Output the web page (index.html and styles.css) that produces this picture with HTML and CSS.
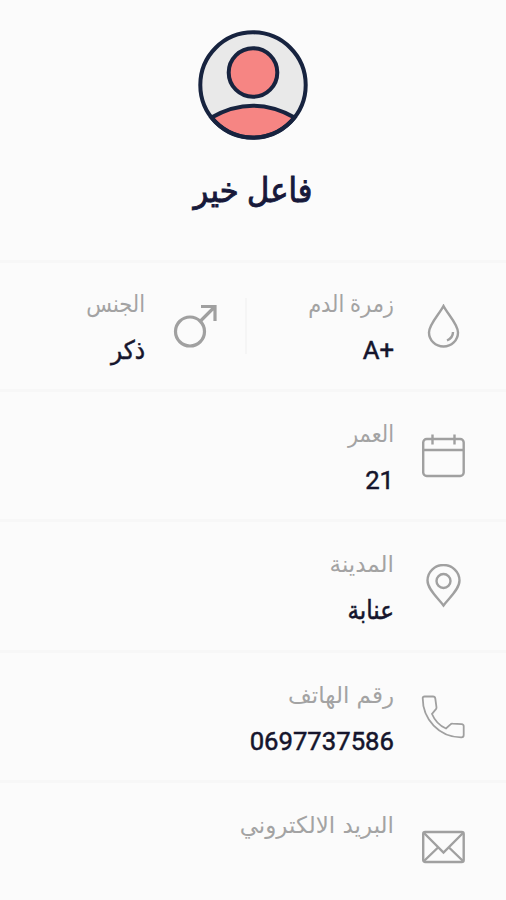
FILE: index.html
```html
<!DOCTYPE html>
<html lang="ar" dir="rtl">
<head>
    <meta charset="UTF-8">
    <meta name="viewport" content="width=device-width, initial-scale=1.0">
    <title>فاعل خير</title>
    <link rel="stylesheet" href="styles.css">
</head>
<body>
    <header class="profile">
        <svg class="avatar" viewBox="0 0 110 110">
            <circle cx="55" cy="55" r="53" fill="#e9e9e9"/>
            <path d="M13.5 87.5Q55 64 96.5 87.5A53 53 0 0 1 13.5 87.5Z" fill="#f68583" stroke="#17233f" stroke-width="4"/>
            <circle cx="55" cy="42.5" r="24.3" fill="#f68583" stroke="#17233f" stroke-width="4"/>
            <circle cx="55" cy="55" r="52.7" fill="none" stroke="#17233f" stroke-width="4"/>
        </svg>
        <h1 class="name">فاعل خير</h1>
    </header>

    <main>
        <section class="row split">
            <div class="item">
                <svg class="icon" viewBox="0 0 44 44">
                    <path d="M22.5 2C18.5 10 8 20 8 28.5A14.5 14 0 0 0 37 28.5C37 20 26.500 10 22.500 2Z"/>
                    <path d="M32 28C32 32 29.5 35 26 36.500"/>
                </svg>
                <div class="info">
                    <span class="label">زمرة الدم</span>
                    <span class="value" dir="ltr">A+</span>
                </div>
            </div>
            <div class="item gender">
                <svg class="icon thick" viewBox="0 0 44 44">
                    <circle cx="17" cy="27.5" r="14.5"/>
                    <path d="M27.500 17L41 3.500M28 2.500H42V17"/>
                </svg>
                <div class="info">
                    <span class="label">الجنس</span>
                    <span class="value">ذكر</span>
                </div>
            </div>
        </section>

        <section class="row">
            <div class="item">
                <svg class="icon" viewBox="0 0 44 44">
                    <rect x="2.2" y="5" width="40.500" height="37" rx="3.500"/>
                    <path d="M2 16H42.500M11.500 .5V10.500M33.500 .5V10.500"/>
                </svg>
                <div class="info">
                    <span class="label">العمر</span>
                    <span class="value" dir="ltr">21</span>
                </div>
            </div>
        </section>

        <section class="row">
            <div class="item">
                <svg class="icon" viewBox="0 0 44 44">
                    <path d="M22.500 41.500C17.500 34.500 6.500 25.500 6.500 16.500A16 15.500 0 0 1 38.500 16.500C38.500 25.500 27.500 34.500 22.500 41.500Z"/>
                    <circle cx="22.500" cy="17" r="7"/>
                </svg>
                <div class="info">
                    <span class="label wide">المدينة</span>
                    <span class="value">عنابة</span>
                </div>
            </div>
        </section>

        <section class="row">
            <div class="item">
                <svg class="icon thin" viewBox="0 0 44 44">
                    <path d="M3.500 1.500H12Q14 1.500 14.300 3.500L15.500 12.500Q15.600 13.800 14.500 14.700L11 19C13.500 25 18 30.500 25 33.500L29.500 29.300Q30.300 28.500 31.500 28.700L40.500 29.200Q42.700 29.400 42.700 31.300V40Q42.700 42.300 40.500 42.300C18 42.500 1.700 24 1.700 3Q1.700 1.500 3.500 1.500Z"/>
                </svg>
                <div class="info">
                    <span class="label wide">رقم الهاتف</span>
                    <span class="value" dir="ltr">0697737586</span>
                </div>
            </div>
        </section>

        <section class="row">
            <div class="item">
                <svg class="icon" viewBox="0 0 44 44">
                    <rect x="2.200" y="7" width="40.500" height="30" rx="2"/>
                    <path d="M3 8L22.500 27.500L42 8M3 36L17 22.500M42 36L28 22.500"/>
                </svg>
                <div class="info">
                    <span class="label wide">البريد الالكتروني</span>
                </div>
            </div>
        </section>
    </main>
</body>
</html>
```

FILE: styles.css
```css
body {
    margin: 0;
    height: 900px;
    overflow: hidden;
    background: #fbfbfb;
    font-family: Roboto, "DejaVu Sans Condensed", "DejaVu Sans", sans-serif;
}
.profile {
    height: 260px;
    box-sizing: border-box;
    padding-top: 30px;
    text-align: center;
}
.avatar {
    display: block;
    width: 110px;
    height: 110px;
    margin: 0 auto;
}
.name {
    margin: 28px 0 0;
    font-size: 34px;
    line-height: 44px;
    font-weight: 400;
    color: #17193a;
    -webkit-text-stroke: 0.9px #17193a;
}
.row {
    display: flex;
    height: 130.5px;
    box-sizing: border-box;
    border-top: 3px solid #f7f7f7;
}
.split {
    height: 128.5px;
}
.item {
    display: flex;
    flex: 1;
    padding: 26px 41px 0 0;
}
.split .item {
    flex: none;
    width: 218px;
    padding-top: 25px;
}
.split .gender {
    position: relative;
    width: 217px;
    padding-right: 30px;
}
/* line between blood type and gender */
.gender::before {
    content: "";
    position: absolute;
    top: 35px;
    right: 0;
    width: 2px;
    height: 56px;
    background: #f5f5f5;
}
.icon {
    flex: none;
    width: 44px;
    height: 44px;
    margin: 16px 0 0 27px;
    fill: none;
    stroke: #a0a0a0;
    stroke-width: 2.4;
}
.thick {
    margin-left: 28px;
    stroke-width: 3.2;
}
.thin {
    stroke-width: 1.8;
}
.info {
    display: flex;
    flex-direction: column;
    align-items: flex-start;
}
.label {
    font-size: 23.3px;
    line-height: 32px;
    color: #a3a3a3;
    white-space: nowrap;
}
.wide {
    font-family: "DejaVu Sans", sans-serif;
    font-size: 23px;
}
.value {
    margin-top: 14px;
    font-size: 25.7px;
    line-height: 32px;
    font-weight: 400;
    color: #15152c;
    -webkit-text-stroke: 0.5px #15152c;
}
```
